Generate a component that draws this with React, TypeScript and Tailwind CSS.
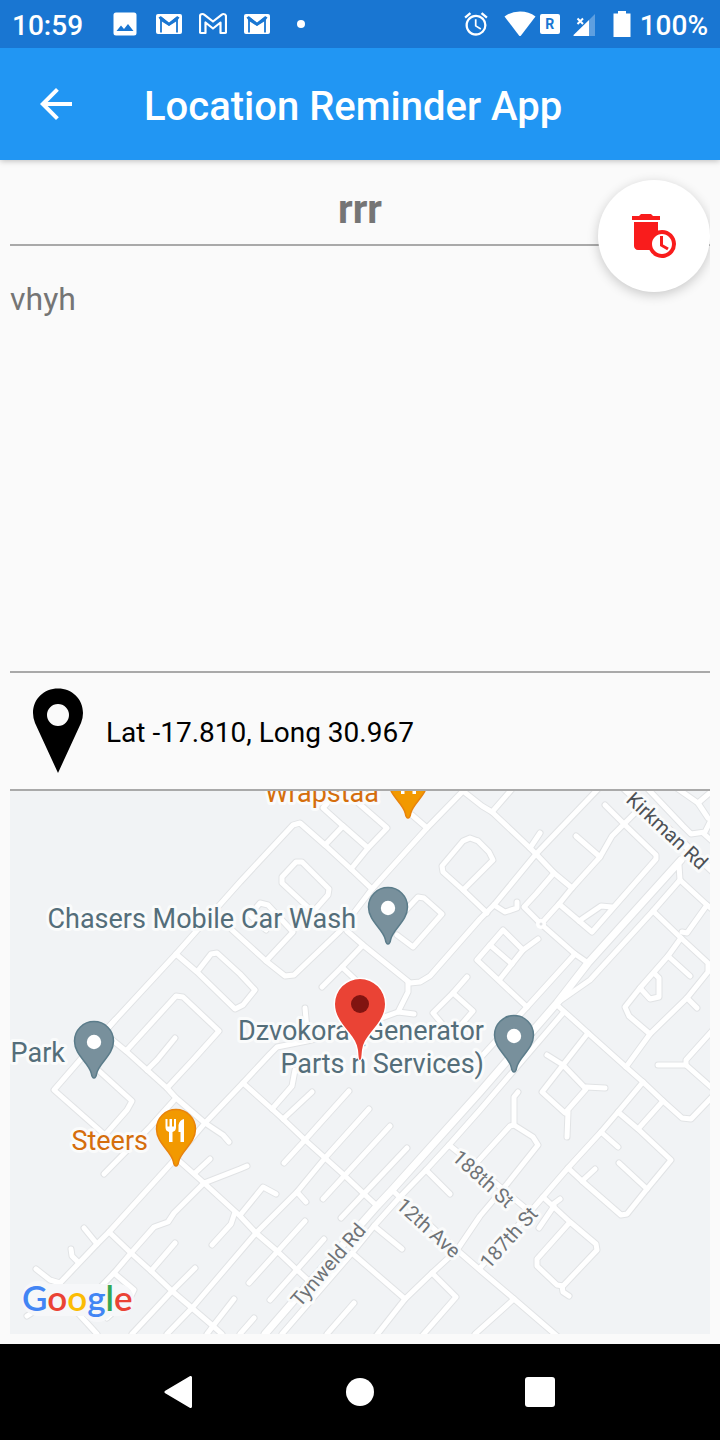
import type { ReactNode } from "react";
import { MdAccessAlarm, MdArrowBack, MdAutoDelete } from "react-icons/md";

const roads: string[] = [
  "104,1032 176,954 240,882 293,825 300,823 325,845 351,869 372,889 340,931 294,975 285,976 266,961 232,930",
  "372,889 427,828 463,791 482,806 492,812 530,848 536,854 554,873 572,888",
  "412,815 427,828",
  "176,954 197,972 235,1009 243,1005 255,990 240,974 217,953 211,954 197,972",
  "110,1038 126,1051 176,996 183,997 219,1031 193,1060 167,1088",
  "126,1051 147,1070 167,1088 176,1098 205,1123 223,1135 229,1142",
  "147,1070 157,1060 175,1038",
  "176,1098 150,1127 104,1174",
  "176,1157 205,1123 243,1083 270,1054 277,1047 307,1041 340,1033 398,1012 414,1014",
  "398,1012 408,992 408,982",
  "305,1008 308,1040",
  "176,1158 109,1232 97,1244 60,1283 50,1280 36,1269",
  "97,1244 84,1228",
  "78,1262 72,1256 71,1249",
  "60,1283 60,1295 27,1316",
  "60,1295 75,1310 97,1334",
  "176,1158 204,1183 240,1216 256,1233 277,1251 296,1269 310,1282",
  "195,1173 210,1159",
  "204,1183 174,1213 168,1222 154,1227 131,1253 114,1273 95,1293",
  "204,1183 240,1169 247,1166",
  "235,1212 231,1224 212,1245",
  "109,1232 131,1253 151,1271 172,1291 192,1308 213,1326 222,1334",
  "151,1271 175,1243",
  "132,1334 172,1291 195,1268",
  "167,1334 192,1308 256,1233 297,1192 325,1158 369,1109",
  "207,1334 213,1326 234,1299",
  "114,1273 134,1290 131,1296 107,1318",
  "243,1083 272,1109 283,1119 305,1140 325,1158 344,1175 363,1193 377,1206",
  "272,1109 292,1086 295,1070",
  "283,1119 312,1092",
  "284,1163 305,1140 349,1091",
  "297,1192 306,1202",
  "323,1199 390,1126",
  "341,1218 407,1148",
  "241,1214 263,1187 276,1194",
  "249,1283 305,1221",
  "270,1300 324,1239",
  "240,1334 254,1318",
  "327,1334 354,1303",
  "282,1334 352,1253 374,1226 399,1198 426,1170 449,1145 480,1110 563,1013",
  "392,1190 457,1250 480,1270 514,1299 557,1336",
  "352,1253 405,1299 376,1336",
  "405,1299 432,1273 457,1250 480,1216 507,1184 538,1145 533,1137 514,1125 510,1126 480,1159 470,1170",
  "514,1125 514,1097 518,1092",
  "432,1273 456,1297 422,1336",
  "374,1226 402,1249",
  "426,1170 450,1194",
  "449,1145 480,1170 530,1212",
  "514,1299 475,1334",
  "480,1268 530,1212 543,1197 568,1168 601,1132 618,1112 643,1082",
  "543,1197 570,1222 596,1244 597,1250 563,1286 557,1285 537,1266 537,1259 570,1222",
  "562,1286 563,1292 569,1296",
  "552,1205 560,1199",
  "554,1206 539,1228",
  "568,1168 582,1181 621,1215 627,1214 647,1189 671,1160 638,1129 618,1112",
  "582,1181 595,1169",
  "619,1163 647,1189",
  "601,1132 618,1147",
  "638,1129 663,1101",
  "557,1005 588,1033 626,1067 643,1082 663,1101 682,1118 691,1119 712,1097",
  "626,1067 650,1034 687,998 708,972 708,963 681,938 653,911",
  "650,1034 629,1016 625,1007 640,988 668,956 681,938",
  "687,998 697,1008",
  "668,956 690,976",
  "640,988 650,999 659,997 659,978 654,973",
  "712,1031 686,1060 686,1065 658,1065",
  "686,1065 712,1088",
  "547,1055 563,1065 542,1092 565,1113 586,1089 563,1065 588,1033",
  "586,1087 605,1088",
  "568,1112 567,1137",
  "472,1067 527,1007 575,954",
  "557,1003 590,980 653,911 680,880 679,865",
  "680,880 707,905 713,910",
  "707,905 687,933 682,932",
  "605,805 624,824 656,855 656,859 592,932 579,921 559,904 572,888 600,857 612,836 624,824 645,803",
  "576,836 600,857",
  "579,921 601,906 612,907",
  "492,812 512,789",
  "536,854 598,789",
  "530,848 540,833",
  "536,854 494,905 480,919 430,976 420,982 410,983 363,945 347,931",
  "494,905 505,912 517,908 517,902",
  "554,873 536,894 524,907 541,924 575,954 588,963",
  "541,924 559,904",
  "478,841 470,838 463,841 442,866 443,872 463,890 493,860 489,852 478,841",
  "463,890 487,913",
  "325,845 343,826 368,848 387,828 348,794",
  "351,869 368,848",
  "343,826 323,808 330,800",
  "313,912 282,883 282,877 296,862 302,862 329,889 328,895 313,912",
  "266,961 293,932 280,918 268,905 260,903 250,915 266,930",
  "405,911 418,897 424,898 442,914 413,947 397,935",
  "363,945 342,967 322,987",
  "342,967 360,984",
  "467,977 453,993 433,1013 443,1025",
  "453,993 473,1011 455,1032",
  "500,979 523,950 503,930 477,960 527,1007",
  "490,945 512,964",
  "523,950 538,939",
  "115,1020 80,1060 54,1090 105,1135 127,1110 132,1101 98,1070",
  "648,789 683,826 691,834 705,832 712,818",
  "678,789 698,803 708,818",
  "698,803 712,791",
  "703,833 712,841",
];

const mainRoads: string[] = [
  "265,1334 310,1282 377,1206 392,1190 480,1092 557,1003 588,963 681,860",
  "622,786 714,872",
];

interface LabelProps {
  x: number;
  y: number;
  fill: string;
  size?: number;
  anchor?: "start" | "middle" | "end";
  angle?: number;
  children: ReactNode;
}

function MapLabel({ x, y, fill, size = 27, anchor = "end", angle = 0, children }: LabelProps) {
  return (
    <text
      transform={`translate(${x} ${y}) rotate(${angle})`}
      fill={fill}
      fontSize={size}
      textAnchor={anchor}
      stroke="#fafbfb"
      strokeWidth={6}
      strokeLinejoin="round"
      paintOrder="stroke"
    >
      {children}
    </text>
  );
}

interface PinProps {
  x: number;
  y: number;
  kind?: "place" | "food";
}

function PlacePin({ x, y, kind = "place" }: PinProps) {
  const food = kind === "food";
  return (
    <g transform={`translate(${x} ${y})`}>
      <path
        d="M0 37C-2 37-2.300 35-2.800 32C-5 22-19.500 14-19.500 0A19.500 19.500 0 0 1 19.500 0C19.500 14 5 22 2.800 32C2.300 35 2 37 0 37Z"
        fill={food ? "#f29900" : "#78909c"}
        stroke={food ? "#e8830c" : "#5b7c8a"}
        strokeWidth="1.5"
      />
      {food ? (
        <g fill="#fff">
          <path d="M-10.500-10h2v7.500h2v-7.500h2.500v7.500h2v-7.500h2v8.500q0 3.500-3.500 4.500v10h-3.500v-10q-3.500-1-3.500-4.500z" />
          <path d="M8-10v23H4.500V3H2.500v-7q1-5 5.500-6z" />
        </g>
      ) : (
        <circle r="7.200" cy="1" fill="#fff" />
      )}
    </g>
  );
}

function LocationMap() {
  return (
    <svg
      className="block h-[543px] w-full bg-[#f1f3f5]"
      viewBox="10 791 700 543"
      preserveAspectRatio="xMidYMid slice"
      role="img"
      aria-label="Map of the reminder location"
      fontFamily="Roboto, sans-serif"
    >
      <g fill="none" strokeLinecap="round" strokeLinejoin="round">
        <g stroke="#e1e3e5">
          {roads.map((points) => (
            <polyline key={points} points={points} strokeWidth="7" />
          ))}
          {mainRoads.map((points) => (
            <polyline key={points} points={points} strokeWidth="9" />
          ))}
        </g>
        <g stroke="#fff">
          {roads.map((points) => (
            <polyline key={points} points={points} strokeWidth="5" />
          ))}
          {mainRoads.map((points) => (
            <polyline key={points} points={points} strokeWidth="7" />
          ))}
        </g>
        <circle cx="541" cy="924" r="5" fill="#fff" />
        <circle cx="541" cy="924" r="1.500" fill="#e1e3e5" />
        <path d="M38 1300H118M38 1297H39M97 1306H98" stroke="#f6f7f9" strokeWidth="32" />
      </g>

      <MapLabel x={625} y={801} fill="#4d5156" size={20} anchor="start" angle={43}>
        Kirkman Rd
      </MapLabel>
      <MapLabel x={451} y={1159} fill="#6f7377" size={20} anchor="start" angle={42}>
        188th St
      </MapLabel>
      <MapLabel x={395} y={1207} fill="#6f7377" size={20} anchor="start" angle={42}>
        12th Ave
      </MapLabel>
      <MapLabel x={489} y={1270} fill="#6f7377" size={20} anchor="start" angle={-48}>
        187th St
      </MapLabel>
      <MapLabel x={300} y={1308} fill="#6f7377" size={20} anchor="start" angle={-49}>
        Tynweld Rd
      </MapLabel>

      <MapLabel x={379} y={802} fill="#d56e0c">Wrapstaa</MapLabel>
      <MapLabel x={356} y={928} fill="#546e7a">Chasers Mobile Car Wash</MapLabel>
      <MapLabel x={65} y={1062} fill="#546e7a">Park</MapLabel>
      <MapLabel x={484} y={1040} fill="#546e7a">Dzvokora (Generator</MapLabel>
      <MapLabel x={484} y={1073} fill="#546e7a">Parts n Services)</MapLabel>
      <MapLabel x={148} y={1150} fill="#d56e0c">Steers</MapLabel>

      <PlacePin x={408} y={781} kind="food" />
      <PlacePin x={388} y={907} />
      <PlacePin x={94} y={1041} />
      <PlacePin x={514} y={1035} />
      <PlacePin x={176} y={1129} kind="food" />

      <g transform="translate(360 1004)">
        <path
          d="M0 56C-1.500 56-1.500 50-2 46C-4 29-25 20-25 0A25 25 0 0 1 25 0C25 20 4 29 2 46C1.500 50 1.500 56 0 56Z"
          fill="#ea4335"
          stroke="#fff"
          strokeWidth="3"
          paintOrder="stroke"
        />
        <circle r="9" fill="#811411" />
      </g>

      <text
        x="22"
        y="1311"
        fontFamily="Lato, sans-serif"
        fontSize="35"
        fontWeight="600"
      >
        <tspan fill="#4285f4">G</tspan>
        <tspan fill="#ea4335">o</tspan>
        <tspan fill="#fbbc04">o</tspan>
        <tspan fill="#4285f4">g</tspan>
        <tspan fill="#34a853">l</tspan>
        <tspan fill="#ea4335">e</tspan>
      </text>
    </svg>
  );
}

function MailIcon() {
  return (
    <svg className="h-6 w-7" viewBox="0 0 28 24" aria-hidden="true">
      <rect x="1" y="2" width="26" height="20" rx="2" fill="#fff" />
      <path d="M6 20.500V6.500L14 12.500L22 6.500V20.500" fill="none" stroke="#1976d2" strokeWidth="1.800" />
      <path d="M3.500 5.500L6 4L14 10.500L22 4L24.500 5.500L22 9L14 14L6 9Z" fill="#1976d2" />
      <path d="M6 4L14 10L22 4Z" fill="#fff" />
    </svg>
  );
}

function MailOutlineIcon() {
  return (
    <svg className="h-6 w-7" viewBox="0 0 28 24" aria-hidden="true">
      <path
        d="M1 4.500Q1 2 3.500 2Q4.500 2 5.500 2.800L14 9.500L22.500 2.800Q23.500 2 24.500 2Q27 2 27 4.500V20Q27 21 26 21H21.500V10.500L14 16.500L6.500 10.500V21H2Q1 21 1 20Z"
        fill="none"
        stroke="#fff"
        strokeWidth="2.200"
        strokeLinejoin="round"
      />
    </svg>
  );
}

function StatusBar() {
  return (
    <div className="relative z-20 flex h-12 items-center justify-between bg-[#1976d2] px-3 text-[28px] font-medium text-white">
      <div className="flex items-center gap-7">
        <span className="pt-1">10:59</span>
        <div className="flex items-center gap-4">
          <svg className="h-6 w-7" viewBox="0 0 28 24" aria-hidden="true">
            <path
              fill="#fff"
              fillRule="evenodd"
              d="M5 .500H23Q25.500 .500 25.500 3V21Q25.500 23.500 23 23.500H5Q2.500 23.500 2.500 21V3Q2.500 .500 5 .500ZM5.500 19H22.500L17 12L13 17L10 13.500Z"
            />
          </svg>
          <MailIcon />
          <MailOutlineIcon />
          <MailIcon />
          <svg className="h-6 w-7" viewBox="0 0 28 24" aria-hidden="true">
            <circle cx="14" cy="12" r="4" fill="#fff" />
          </svg>
        </div>
      </div>
      <div className="flex items-center">
        <MdAccessAlarm className="mr-3.5 size-7" aria-hidden="true" />
        <svg className="h-7 w-8" viewBox="0 0 32 28" aria-hidden="true">
          <path d="M.500 6.500Q7 1.500 16 1.500T31.500 6.500L17 25.500Q16 26.500 15 25.500Z" fill="#fff" />
        </svg>
        <span className="ml-1 mr-3 flex size-5 items-center justify-center rounded-[2px] bg-white text-[14px] font-bold text-[#1976d2]">
          R
        </span>
        <svg className="mr-4 h-6 w-6" viewBox="0 0 24 24" aria-hidden="true">
          <path d="M23 2V24H17V8Z" fill="#5e9fe0" />
          <path d="M17 8V24H2Q1 23.500 1.500 23Z" fill="#fff" />
          <path d="M5.500 6.500L11 12M11 6.500L5.500 12" stroke="#fff" strokeWidth="2" />
        </svg>
        <svg className="mr-2 h-7 w-5" viewBox="0 0 20 28" aria-hidden="true">
          <path d="M6 1H14V3.500H18.500V27H1.500V3.500H6Z" fill="#fff" />
        </svg>
        <span className="pt-1">100%</span>
      </div>
    </div>
  );
}

function NavigationBar() {
  return (
    <nav className="flex h-24 items-center justify-center bg-black">
      <button type="button" aria-label="Back" className="flex w-1/4 justify-center">
        <svg className="size-8" viewBox="0 0 32 32" aria-hidden="true">
          <path d="M26.500 1.500V30.500L2 16Z" fill="#fff" stroke="#fff" strokeWidth="3" strokeLinejoin="round" />
        </svg>
      </button>
      <button type="button" aria-label="Home" className="flex w-1/4 justify-center">
        <span className="size-7 rounded-full bg-white" />
      </button>
      <button type="button" aria-label="Recent apps" className="flex w-1/4 justify-center">
        <span className="size-[30px] rounded-[3px] bg-white" />
      </button>
    </nav>
  );
}

export default function App() {
  return (
    <div className="flex min-h-screen flex-col bg-[#fafafa] font-[Roboto,sans-serif]">
      <StatusBar />
      <header className="relative z-10 flex h-28 items-center gap-16 bg-[#2196f3] px-8 text-white shadow-[0_1px_6px_rgba(0,0,0,0.25)]">
        <button type="button" aria-label="Go back">
          <MdArrowBack className="size-12" aria-hidden="true" />
        </button>
        <h1 className="pt-1.5 text-[40px] leading-12 font-medium">Location Reminder App</h1>
      </header>

      <main className="relative mx-[10px] mb-[10px] flex flex-1 flex-col overflow-hidden">
        <h2 className="border-b-2 border-[#a9a9a9] pt-[26px] pb-[10px] text-center text-[40px] leading-12 font-bold text-[#757575]">
          rrr
        </h2>
        <button
          type="button"
          aria-label="Delete reminder"
          className="absolute top-5 right-0 flex size-28 items-center justify-center rounded-full bg-white text-[#f91c1c] shadow-[0_3px_12px_rgba(0,0,0,0.2)]"
        >
          <MdAutoDelete className="size-12" aria-hidden="true" />
        </button>
        <p className="flex-1 pt-[31px] text-[32px] leading-11 text-[#757575]">vhyh</p>
        <div className="flex items-center gap-[22px] border-y-2 border-[#a9a9a9] pt-3 pb-4 pl-[22px]">
          <svg className="h-[88px] w-[52px]" viewBox="0 0 52 88" aria-hidden="true">
            <path
              fill="#000"
              fillRule="evenodd"
              d="M26 3.500C12 3.500 1 14 1 28Q1 33 3 38L26 88L49 38Q51 33 51 28C51 14 40 3.500 26 3.500ZM26 19A11 11 0 1 1 26 41A11 11 0 1 1 26 19Z"
            />
          </svg>
          <p className="pt-2 text-[28px] leading-8 text-black">Lat -17.810, Long 30.967</p>
        </div>
        <LocationMap />
      </main>
      <NavigationBar />
    </div>
  );
}
